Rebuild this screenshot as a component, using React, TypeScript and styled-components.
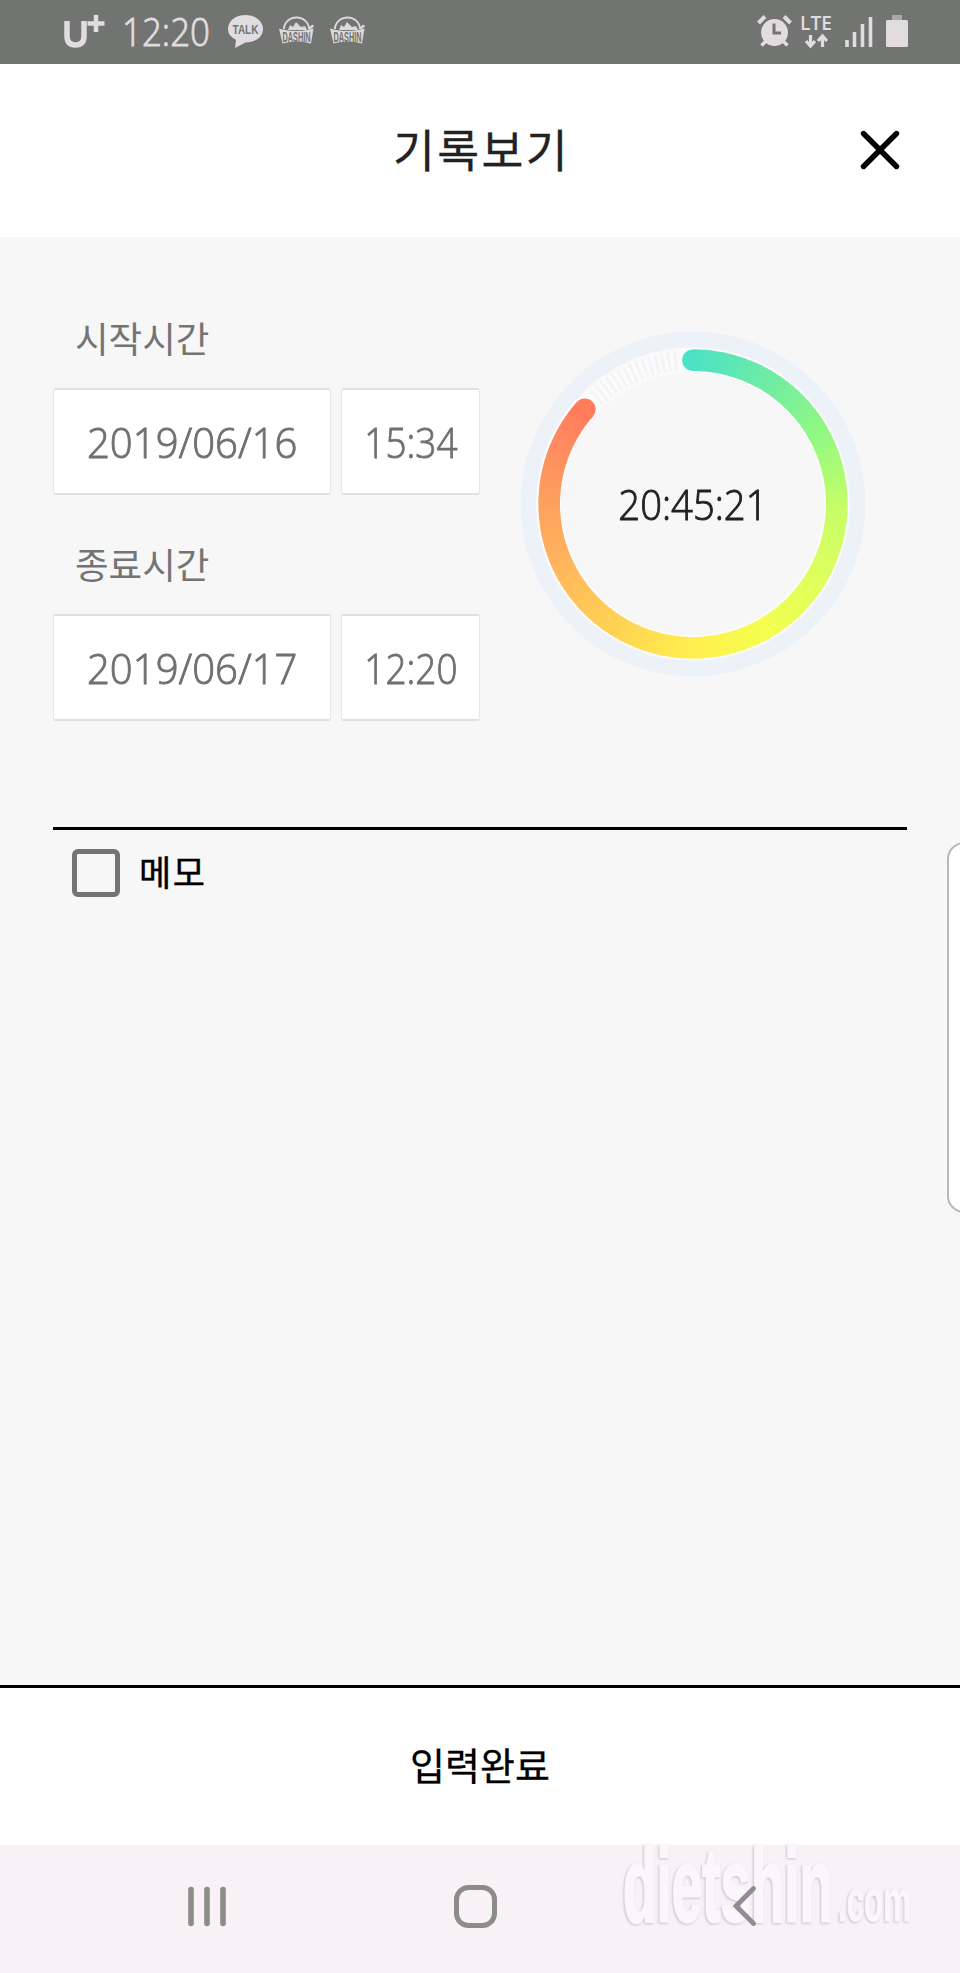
import React from "react";
import styled, { createGlobalStyle } from "styled-components";

const GlobalStyle = createGlobalStyle`
  * { box-sizing: border-box; }
  body { margin: 0; background: #f7f7f7; font-family: "Noto Sans CJK KR", sans-serif; }
`;

const Screen = styled.div`
  position: relative;
  display: flex;
  flex-direction: column;
  width: 960px;
  height: 1973px;
  overflow: hidden;
  background: #f7f7f7;
`;

const StatusBar = styled.div`
  display: flex;
  justify-content: space-between;
  height: 64px;
  flex: none;
  background: #717470;
`;

const Header = styled.header`
  display: grid;
  grid-template-columns: 1fr auto 1fr;
  align-items: center;
  height: 173px;
  flex: none;
  background: #fff;
`;

const Title = styled.h1`
  grid-column: 2;
  margin: 0;
  padding: 0 0 5px 3px;
  font-size: 45.5px;
  font-weight: 400;
  letter-spacing: 2.4px;
  line-height: 60px;
  color: #222;
  -webkit-text-stroke: 0.3px #222;
`;

const CloseButton = styled.button`
  justify-self: end;
  display: flex;
  margin: 0 55px 1px 0;
  padding: 0;
  border: 0;
  background: none;
`;

const Content = styled.main`
  display: flex;
  flex-direction: column;
  flex: 1;
  padding: 75px 53px 0;
`;

const Summary = styled.section`
  display: flex;
  justify-content: space-between;
  height: 515px;
`;

const Times = styled.div`
  width: 427px;
`;

const TimeGroup = styled.div`
  height: 226px;
`;

const Label = styled.div`
  height: 76px;
  padding-left: 22px;
  font-size: 36.5px;
  line-height: 52px;
  color: #747474;
`;

const Fields = styled.div`
  display: flex;
  gap: 10px;
`;

const Field = styled.div<{ $width: number }>`
  display: flex;
  align-items: center;
  justify-content: center;
  width: ${(p) => p.$width}px;
  height: 107px;
  border: 1px solid #e6e6e6;
  border-width: 2px 1px;
  border-color: #e0e0e0 #e8e8e8;
  border-radius: 3px;
  background: #fff;
`;

const Digits = styled.span<{ $stretch: number; $color?: string }>`
  padding-top: 1px;
  font-family: "Open Sans", sans-serif;
  font-size: 42px;
  font-weight: 300;
  line-height: 50px;
  white-space: nowrap;
  color: ${(p) => p.$color ?? "#707070"};
  -webkit-text-stroke: 0.9px currentColor;
  transform: scaleX(${(p) => p.$stretch});
`;

const Dial = styled.div`
  display: grid;
  place-items: center;
  width: 346px;
  height: 346px;
  margin: 18.500px 41px 0 0;
  > * { grid-area: 1 / 1; }
`;

const MemoRow = styled.label`
  display: flex;
  align-items: center;
  gap: 19px;
  padding: 17px 0 0 19px;
  border-top: 3px solid #000;
  font-size: 35px;
  line-height: 48px;
  letter-spacing: 1.5px;
  font-weight: 400;
  color: #000;
  -webkit-text-stroke: 0.4px #000;
`;

const CheckBox = styled.span`
  width: 48px;
  height: 48px;
  border: 5px solid #747474;
  border-radius: 6px;
`;

const MemoText = styled.span`
  padding-bottom: 3px;
`;

const EdgePanel = styled.div`
  position: absolute;
  left: 947px;
  top: 842px;
  width: 40px;
  height: 371px;
  border: 2px solid #b9b9b9;
  border-radius: 17px;
  background: #fff;
`;

const Submit = styled.button`
  height: 160px;
  flex: none;
  border: 0;
  border-top: 3px solid #000;
  padding: 0 0 6px;
  background: #fff;
  font: 400 38px/60px "Noto Sans CJK KR", sans-serif;
  color: #000;
  -webkit-text-stroke: 0.3px #000;
`;

const NavBar = styled.nav`
  height: 128px;
  flex: none;
  background: #f6f2f6;
`;

const Watermark = styled.svg`
  position: absolute;
  left: 600px;
  top: 1800px;
  pointer-events: none;
  filter: drop-shadow(-1px 1px 1px rgba(90, 80, 90, 0.28));
`;

const BackLayer = styled.svg`
  position: absolute;
  left: 725px;
  top: 1880px;
`;

const C = 173;
const R = 143.8;
const END = 311.2;
const STOPS: [number, number[]][] = [
  [0, [76, 226, 196]],
  [30, [110, 235, 166]],
  [60, [144, 248, 132]],
  [90, [196, 253, 104]],
  [120, [222, 255, 94]],
  [150, [244, 254, 78]],
  [180, [255, 240, 78]],
  [210, [255, 212, 82]],
  [240, [255, 186, 92]],
  [270, [255, 160, 94]],
  [300, [255, 134, 96]],
  [312, [255, 122, 90]],
];

const point = (deg: number, r = R) => {
  const a = (deg * Math.PI) / 180;
  return [C + r * Math.sin(a), C - r * Math.cos(a)];
};

const colorAt = (deg: number) => {
  let i = 0;
  while (i < STOPS.length - 2 && deg > STOPS[i + 1][0]) i++;
  const [d0, c0] = STOPS[i];
  const [d1, c1] = STOPS[i + 1];
  const t = (deg - d0) / (d1 - d0);
  return `rgb(${c0.map((v, k) => Math.round(v + (c1[k] - v) * t)).join(",")})`;
};

const arc = (from: number, to: number) => {
  const [x0, y0] = point(from);
  const [x1, y1] = point(to);
  return `M${x0} ${y0}A${R} ${R} 0 ${to - from > 180 ? 1 : 0} 1 ${x1} ${y1}`;
};

function Ring() {
  const steps = Array.from({ length: 156 }, (_, i) => i * 2);
  const ticks = Array.from({ length: 15 }, (_, i) => 318 + i * 2.5);
  const [ex, ey] = point(END);
  return (
    <svg width="346" height="346" viewBox="0 0 346 346" fill="none">
      <circle cx={C} cy={C} r="164.7" stroke="#edf2f8" strokeWidth="15.5" />
      <path d={arc(314, 357)} stroke="#fbfbfb" strokeWidth="24" />
      {ticks.map((d) => {
        const [x0, y0] = point(d, 134);
        const [x1, y1] = point(d, 154);
        return <line key={d} x1={x0} y1={y0} x2={x1} y2={y1} stroke="#f3f4f6" strokeWidth="2.8" />;
      })}
      <path d={arc(0, END)} stroke="#fcfcfc" strokeWidth="25" strokeLinecap="round" />
      <circle cx={C} cy={C - R} r="10.8" fill={colorAt(0)} />
      {steps.map((d) => (
        <path key={d} d={arc(d, Math.min(d + 2.4, END))} stroke={colorAt(d + 1)} strokeWidth="21.6" />
      ))}
      <circle cx={ex} cy={ey} r="10.8" fill={colorAt(END)} />
    </svg>
  );
}

const Badge = ({ x }: { x: number }) => (
  <g transform={`translate(${x} 16)`}>
    <path d="M5 13a12.500 11.500 0 0 1 25 0" stroke="#dcd8dc" strokeWidth="2" fill="none" />
    <path d="M9 14l2-5 3 2 3-5 5 5 4-1 2 4z" fill="#dcd8dc" />
    <path d="M0 12.500l3.500 1q14 3 27 0l4-1-2.500 15q-14-4-28.500 0z" fill="#dcd8dc" />
    <path d="M31 12l2.500-2" stroke="#dcd8dc" strokeWidth="2.500" strokeLinecap="round" />
    <text x="3.500" y="25.500" fontFamily="Liberation Sans Narrow, Liberation Sans" fontWeight="700" fontSize="14.500" fill="#717470" textLength="28" lengthAdjust="spacingAndGlyphs">DASHIN</text>
  </g>
);

function StatusLeft() {
  return (
    <svg width="400" height="64" fill="#e0dce0">
      <path d="M67 21v15q0 9 8.500 9t8.500-9V21" fill="none" stroke="#e0dce0" strokeWidth="5.500" />
      <path d="M96 15v17M87.500 23.500h17" stroke="#e0dce0" strokeWidth="4.500" />
      <text x="122" y="46" fontFamily="Open Sans" fontWeight="300" fontSize="39" stroke="#e0dce0" strokeWidth=".9" textLength="88" lengthAdjust="spacingAndGlyphs">12:20</text>
      <path d="M245.500 15c10 0 17.500 6 17.500 14s-7.500 13.500-17.500 13.500L235 48l1-8c-5-3-8-6-8-11 0-8 7.500-14 17.500-14z" />
      <text x="232.500" y="34" fontFamily="Liberation Sans" fontWeight="700" fontSize="12.500" fill="#717470" textLength="26" lengthAdjust="spacingAndGlyphs">TALK</text>
      <Badge x={279} />
      <Badge x={330} />
    </svg>
  );
}

function StatusRight() {
  return (
    <svg width="220" height="64" fill="#e0dce0">
      <circle cx="34.500" cy="32.500" r="13.500" />
      <path d="M18.500 23l6.500-6.500M50.500 23L44 16.500" stroke="#e0dce0" strokeWidth="4" />
      <path d="M26 41l-4.500 4.500M43 41l4.500 4.500" stroke="#e0dce0" strokeWidth="3.500" />
      <path d="M34 23.500V33h7" fill="none" stroke="#717470" strokeWidth="3" />
      <text x="60" y="30" fontFamily="Open Sans" fontWeight="600" fontSize="20" textLength="32" lengthAdjust="spacingAndGlyphs">LTE</text>
      <path d="M70.500 35v11M66 41l4.500 5 4.500-5M82.500 47V36M78 41l4.500-5 4.500 5" fill="none" stroke="#e0dce0" strokeWidth="3.200" />
      <path d="M107 40v7M114.500 32v15M122.500 24v23M130.500 17v30" stroke="#e0dce0" strokeWidth="3.600" />
      <path d="M152 15h10v5h-10z" fill="#a9a8a8" />
      <rect x="146" y="20" width="22" height="27" rx="1.500" />
    </svg>
  );
}

function NavIcons() {
  return (
    <svg width="960" height="128" fill="none">
      <path d="M191 44.500v34M207 44.500v34M223 44.500v34" stroke="#8b8d89" strokeWidth="5.600" strokeLinecap="round" />
      <rect x="456.500" y="42.500" width="38" height="38" rx="12" stroke="#8b8d89" strokeWidth="5" />
    </svg>
  );
}

const mark = {
  fontFamily: "Liberation Sans",
  fontWeight: 700,
  fill: "#faf6fa",
  stroke: "#faf6fa",
};

export default function App() {
  return (
    <Screen>
      <GlobalStyle />
      <StatusBar>
        <StatusLeft />
        <StatusRight />
      </StatusBar>
      <Header>
        <Title>기록보기</Title>
        <CloseButton aria-label="닫기">
          <svg width="50" height="50" fill="none">
            <path d="M8.500 8.500l33 33M41.500 8.500l-33 33" stroke="#000" strokeWidth="5.400" strokeLinecap="round" />
          </svg>
        </CloseButton>
      </Header>
      <Content>
        <Summary>
          <Times>
            <TimeGroup>
              <Label>시작시간</Label>
              <Fields>
                <Field $width={278}><Digits $stretch={0.955}>2019/06/16</Digits></Field>
                <Field $width={139}><Digits $stretch={0.88}>15:34</Digits></Field>
              </Fields>
            </TimeGroup>
            <TimeGroup>
              <Label>종료시간</Label>
              <Fields>
                <Field $width={278}><Digits $stretch={0.955}>2019/06/17</Digits></Field>
                <Field $width={139}><Digits $stretch={0.88}>12:20</Digits></Field>
              </Fields>
            </TimeGroup>
          </Times>
          <Dial>
            <Ring />
            <Digits $stretch={0.91} $color="#222">20:45:21</Digits>
          </Dial>
        </Summary>
        <MemoRow>
          <CheckBox />
          <MemoText>메모</MemoText>
        </MemoRow>
      </Content>
      <Submit>입력완료</Submit>
      <NavBar>
        <NavIcons />
      </NavBar>
      <Watermark width="360" height="173">
        <text {...mark} transform="translate(23 121) scale(.527 1)" fontSize="104" strokeWidth="3">dietshin</text>
        <text {...mark} transform="translate(238 121) scale(.53 1)" fontSize="59" strokeWidth="1">.com</text>
      </Watermark>
      <BackLayer width="40" height="52" fill="none">
        <path d="M28.500 8.500L11 26l17.500 17.500" stroke="#858385" strokeWidth="4.800" strokeLinecap="round" opacity=".9" />
      </BackLayer>
      <EdgePanel />
    </Screen>
  );
}
